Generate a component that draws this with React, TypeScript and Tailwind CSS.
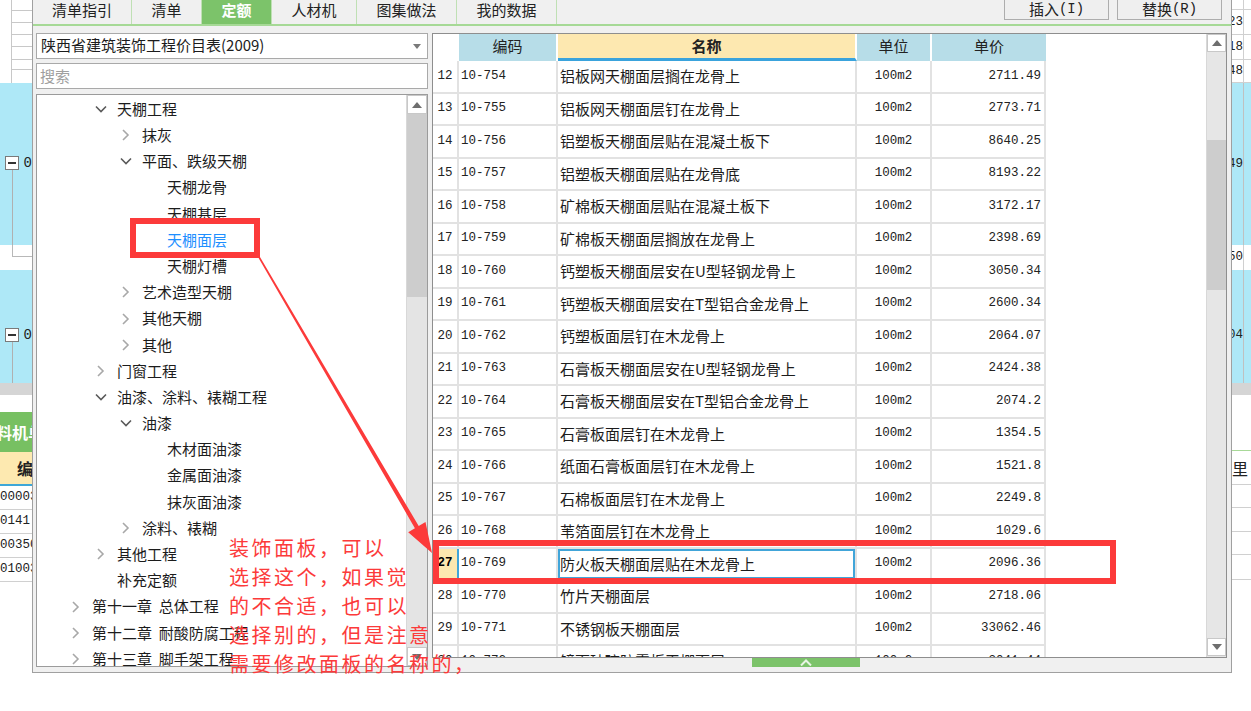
import React from 'react';

type Row = [string, string, string, string];

const rows: Row[] = [
  ['12', '10-754', '铝板网天棚面层搁在龙骨上', '2711.49'],
  ['13', '10-755', '铝板网天棚面层钉在龙骨上', '2773.71'],
  ['14', '10-756', '铝塑板天棚面层贴在混凝土板下', '8640.25'],
  ['15', '10-757', '铝塑板天棚面层贴在龙骨底', '8193.22'],
  ['16', '10-758', '矿棉板天棚面层贴在混凝土板下', '3172.17'],
  ['17', '10-759', '矿棉板天棚面层搁放在龙骨上', '2398.69'],
  ['18', '10-760', '钙塑板天棚面层安在U型轻钢龙骨上', '3050.34'],
  ['19', '10-761', '钙塑板天棚面层安在T型铝合金龙骨上', '2600.34'],
  ['20', '10-762', '钙塑板面层钉在木龙骨上', '2064.07'],
  ['21', '10-763', '石膏板天棚面层安在U型轻钢龙骨上', '2424.38'],
  ['22', '10-764', '石膏板天棚面层安在T型铝合金龙骨上', '2074.2'],
  ['23', '10-765', '石膏板面层钉在木龙骨上', '1354.5'],
  ['24', '10-766', '纸面石膏板面层钉在木龙骨上', '1521.8'],
  ['25', '10-767', '石棉板面层钉在木龙骨上', '2249.8'],
  ['26', '10-768', '苇箔面层钉在木龙骨上', '1029.6'],
  ['27', '10-769', '防火板天棚面层贴在木龙骨上', '2096.36'],
  ['28', '10-770', '竹片天棚面层', '2718.06'],
  ['29', '10-771', '不锈钢板天棚面层', '33062.46'],
  ['30', '10-772', '镜面玻璃防雾板天棚面层', '3041.44'],
];

type Node = [number, 'down' | 'right' | null, string];

const tree: Node[] = [
  [2, 'down', '天棚工程'],
  [3, 'right', '抹灰'],
  [3, 'down', '平面、跌级天棚'],
  [4, null, '天棚龙骨'],
  [4, null, '天棚基层'],
  [4, null, '天棚面层'],
  [4, null, '天棚灯槽'],
  [3, 'right', '艺术造型天棚'],
  [3, 'right', '其他天棚'],
  [3, 'right', '其他'],
  [2, 'right', '门窗工程'],
  [2, 'down', '油漆、涂料、裱糊工程'],
  [3, 'down', '油漆'],
  [4, null, '木材面油漆'],
  [4, null, '金属面油漆'],
  [4, null, '抹灰面油漆'],
  [3, 'right', '涂料、裱糊'],
  [2, 'right', '其他工程'],
  [2, null, '补充定额'],
  [1, 'right', '第十一章  总体工程'],
  [1, 'right', '第十二章  耐酸防腐工程'],
  [1, 'right', '第十三章  脚手架工程'],
];

const indent: Record<number, string> = {
  1: 'pl-[33px]',
  2: 'pl-[58px]',
  3: 'pl-[83px]',
  4: 'pl-[108px]',
};

const tabs = [
  { label: '清单指引', w: 'w-[99px]' },
  { label: '清单', w: 'w-[70px]' },
  { label: '定额', w: 'w-[70px]', active: true },
  { label: '人材机', w: 'w-[85px]' },
  { label: '图集做法', w: 'w-[100px]' },
  { label: '我的数据', w: 'w-[100px]' },
];

const mono = "font-['Liberation_Mono','Noto_Sans_CJK_SC',monospace]";

const Up = () => (
  <svg width="10" height="6" viewBox="0 0 10 6">
    <path d="M0 6 L5 0 L10 6 Z" fill="#6e6e6e" />
  </svg>
);

const Down = () => (
  <svg width="10" height="6" viewBox="0 0 10 6">
    <path d="M0 0 L5 6 L10 0 Z" fill="#6e6e6e" />
  </svg>
);

const Chevron = ({ dir }: { dir: 'down' | 'right' }) =>
  dir === 'down' ? (
    <svg width="12" height="12" viewBox="0 0 12 12">
      <polyline points="1,3.5 6,8.5 11,3.5" fill="none" stroke="#5a5a5a" strokeWidth="1.6" />
    </svg>
  ) : (
    <svg width="12" height="12" viewBox="0 0 12 12">
      <polyline points="3,1 8,6 3,11" fill="none" stroke="#a8a8a8" strokeWidth="1.6" />
    </svg>
  );

const MinusBox = () => (
  <div className="w-[14px] h-[14px] border border-[#7a7a7a] bg-white flex items-center justify-center">
    <div className="w-[8px] h-[1.5px] bg-[#333]" />
  </div>
);

const LeftBg = () => (
  <div className="w-[32px] h-[711px] shrink-0 flex flex-col overflow-hidden text-[#222]">
    <div className="h-[83px] flex">
      <div className="w-[12px] border-r border-[#c8c8c8]" />
      <div className="flex-1 flex flex-col">
        <div className="h-[11px] border-b border-[#c8c8c8]" />
        <div className="h-[12px] border-b border-[#c8c8c8]" />
        <div className="h-[12px] border-b border-[#c8c8c8]" />
        <div className="h-[12px] border-b border-[#c8c8c8]" />
        <div className="h-[13px] border-b border-[#c8c8c8]" />
        <div className="h-[10px] border-b border-[#c8c8c8]" />
      </div>
    </div>
    <div className="h-[162px] bg-[#aee8f7] flex flex-col pt-[73px]">
      <div className="flex items-center gap-[5px] pl-[5px] h-[14px]">
        <MinusBox />
        <span className={`${mono} text-[14px]`}>0</span>
      </div>
      <div className="ml-[12px] flex-1 border-l border-[#b0b0b0]" />
    </div>
    <div className="h-[25px] flex flex-col">
      <div className="ml-[12px] h-[12px] border-l border-b border-[#b8b8b8]" />
    </div>
    <div className="h-[113px] bg-[#aee8f7] flex flex-col pt-[58px]">
      <div className="flex items-center gap-[5px] pl-[5px] h-[14px]">
        <MinusBox />
        <span className={`${mono} text-[14px]`}>0</span>
      </div>
      <div className="ml-[12px] flex-1 border-l border-[#b0b0b0]" />
    </div>
    <div className="h-[12px] bg-[#d5d5d5]" />
    <div className="h-[17px]" />
    <div className="h-[40px] bg-[#77c062] flex items-center overflow-hidden">
      <span className="-ml-[4px] text-white font-bold text-[16px] whitespace-nowrap">料机单</span>
    </div>
    <div className="h-[34px] bg-[#fde9b0] border-b-2 border-[#3ea7d8] flex items-center pl-[17px] overflow-hidden">
      <span className="font-bold text-[16px] whitespace-nowrap">编码</span>
    </div>
    {['00003', '0141', '00350', '01003'].map((t) => (
      <div key={t} className={`h-[24px] border-b border-[#d0d0d0] flex items-center ${mono} text-[12.5px] whitespace-nowrap`}>
        {t}
      </div>
    ))}
  </div>
);

const RightBg = () => (
  <div className={`w-[19px] h-[711px] shrink-0 flex flex-col overflow-hidden ${mono} text-[12.5px] text-[#222]`}>
    <div className="h-[10px] border-b border-[#d0d0d0] flex">
      <div className="w-[12px] border-r border-[#d0d0d0]" />
    </div>
    {['23', '18', '48'].map((t, i) => (
      <div key={t} className={`${i === 2 ? 'h-[23px]' : 'h-[25px]'} border-b border-[#d0d0d0] flex`}>
        <div className="w-[12px] border-r border-[#d0d0d0] flex items-center justify-end overflow-hidden whitespace-nowrap">{t}</div>
      </div>
    ))}
    <div className="h-[162px] bg-[#aee8f7] flex">
      <div className="w-[12px] border-r border-[#c0c0c0] flex items-center justify-end overflow-hidden">49</div>
    </div>
    <div className="h-[25px] flex">
      <div className="w-[12px] border-r border-[#d0d0d0] flex items-center justify-end overflow-hidden">50</div>
    </div>
    <div className="h-[113px] bg-[#aee8f7] flex">
      <div className="w-[12px] border-r border-[#c0c0c0] flex items-center justify-end overflow-hidden pt-[18px]">04</div>
    </div>
    <div className="h-[12px] bg-[#d5d5d5]" />
    <div className="h-[56px] border-b border-[#a8d998]" />
    <div className="h-[34px] border-b border-[#d0d0d0] flex items-center font-['Noto_Sans_CJK_SC',sans-serif] text-[16px]">里</div>
    <div className="h-[23px] border-b border-[#d0d0d0]" />
    <div className="h-[24px] border-b border-[#d0d0d0]" />
    <div className="h-[23px] border-b border-[#d0d0d0]" />
    <div className="h-[25px] border-b border-[#d0d0d0]" />
  </div>
);

const TreePanel = () => (
  <div className="flex-1 min-h-0 border border-[#9b9b9b] bg-white flex overflow-hidden">
    <div className="flex-1 flex flex-col overflow-hidden pt-[1px]">
      {tree.map(([lvl, dir, text]) => (
        <div key={text} className={`h-[26.2px] shrink-0 flex items-center ${indent[lvl]}`}>
          <div className="w-[22px] flex items-center">{dir && <Chevron dir={dir} />}</div>
          <span
            className={`text-[15px] whitespace-pre ${
              text === '天棚面层' ? 'text-[#1e8fff]' : 'text-[#1c1c1c]'
            }`}
          >
            {text}
          </span>
        </div>
      ))}
    </div>
    <div className="w-[21px] bg-[#e4e4e4] flex flex-col border-l border-[#d8d8d8]">
      <div className="h-[19px] bg-white border border-[#c8c8c8] flex items-center justify-center">
        <Up />
      </div>
      <div className="h-[183px] bg-[#cdcdcd]" />
      <div className="flex-1" />
      <div className="h-[19px] bg-white border border-[#c8c8c8] flex items-center justify-center">
        <Down />
      </div>
    </div>
  </div>
);

const cellB = 'border-r-2 border-[#e2e2e2]';

const Table = () => (
  <div className="flex-1 min-h-0 border border-[#8e8e8e] bg-white flex overflow-hidden">
    <div className="flex-1 flex flex-col overflow-hidden">
      <div className="h-[27px] shrink-0 flex text-[15px] text-[#222]">
        <div className="w-[26px] border-r-2 border-white bg-white" />
        <div className="w-[99px] border-r-2 border-white bg-[#b7dde8] flex items-center justify-center pb-[2px]">编码</div>
        <div className="w-[299px] border-r-2 border-white bg-[#fde8b0] border-b-[3px] border-b-[#3aa3dc] flex items-center justify-center font-bold">
          名称
        </div>
        <div className="w-[75px] border-r-2 border-white bg-[#b7dde8] flex items-center justify-center pb-[2px]">单位</div>
        <div className="w-[114px] bg-[#b7dde8] flex items-center justify-center pb-[2px]">单价</div>
      </div>
      {rows.map(([n, code, name, price]) => {
        const sel = n === '27';
        return (
          <div key={n} className="h-[32.5px] shrink-0 flex">
            <div className="w-[613px] flex border-b-2 border-[#e2e2e2]">
              <div
                className={`w-[26px] flex items-center justify-center ${mono} text-[12.5px] ${
                  sel ? 'bg-[#fde8b0] font-bold border-r-2 border-[#41a5d9] text-black' : `${cellB} text-[#222]`
                }`}
              >
                {n}
              </div>
              <div className={`w-[99px] ${cellB} flex items-center pl-[2px] ${mono} text-[12.5px] text-[#222]`}>{code}</div>
              <div
                className={`w-[299px] ${cellB} flex items-center pl-[2px] text-[15px] text-[#1c1c1c] whitespace-nowrap overflow-hidden ${
                  sel ? 'ring-2 ring-inset ring-[#41a5d9]' : ''
                }`}
              >
                {name}
              </div>
              <div className={`w-[75px] ${cellB} flex items-center justify-center ${mono} text-[12.5px] text-[#222]`}>100m2</div>
              <div className={`w-[114px] ${cellB} flex items-center justify-end pr-[3px] ${mono} text-[12.5px] text-[#222]`}>
                {price}
              </div>
            </div>
          </div>
        );
      })}
    </div>
    <div className="w-[20px] bg-[#e6e6e6] flex flex-col border-l border-[#d8d8d8] pb-[1px]">
      <div className="h-[18px] bg-white border border-[#c8c8c8] flex items-center justify-center">
        <Up />
      </div>
      <div className="h-[88px]" />
      <div className="h-[150px] bg-[#cdcdcd]" />
      <div className="flex-1" />
      <div className="h-[18px] bg-white border border-[#c8c8c8] flex items-center justify-center">
        <Down />
      </div>
    </div>
  </div>
);

const Dialog = () => (
  <div className="w-[1200px] h-[673px] shrink-0 flex flex-col bg-[#f0f0f0] border-l border-r border-b border-[#a0a0a0]">
    <div className="h-[26px] shrink-0 flex border-b-2 border-[#a6d996]">
      {tabs.map((t) => (
        <div
          key={t.label}
          className={`${t.w} flex items-start justify-center border-r border-[#bfe0b4] text-[15px] leading-[20px] ${
            t.active ? 'bg-[#7cc36a] text-white font-bold' : 'text-[#222]'
          }`}
        >
          {t.label}
        </div>
      ))}
      <div className="ml-auto mr-[9px] flex gap-[8px] items-start">
        <button className="w-[105px] h-[22px] border border-[#adadad] bg-[#efefef] text-[15px] text-[#222] flex items-center justify-center -mt-[2px]">
          插入<span className={`${mono} text-[14px]`}>(I)</span>
        </button>
        <button className="w-[105px] h-[22px] border border-[#adadad] bg-[#efefef] text-[15px] text-[#222] flex items-center justify-center -mt-[2px]">
          替换<span className={`${mono} text-[14px]`}>(R)</span>
        </button>
      </div>
    </div>
    <div className="flex-1 min-h-0 flex pl-[3px] pr-[4px] gap-[4px]">
      <div className="w-[392px] flex flex-col pt-[7px] pb-[5px]">
        <div className="h-[26px] shrink-0 border border-[#a9a9a9] bg-white flex items-center pl-[4px] pr-[6px] text-[15px] text-[#1c1c1c]">
          <span className="flex-1 -mt-px">陕西省建筑装饰工程价目表(2009)</span>
          <svg width="8" height="5" viewBox="0 0 8 5">
            <path d="M0 0 L4 5 L8 0 Z" fill="#7a7a7a" />
          </svg>
        </div>
        <div className="h-[26px] shrink-0 mt-[4px] border border-[#a9a9a9] bg-white flex items-center pl-[3px] text-[15px] text-[#a0a0a0]">
          搜索
        </div>
        <div className="mt-[5px] flex-1 min-h-0 flex">
          <TreePanel />
        </div>
      </div>
      <div className="flex-1 flex flex-col pt-[7px]">
        <Table />
        <div className="h-[14px] shrink-0 bg-[#f0f0f0]">
          <div className="ml-[320px] w-[108px] h-[9px] bg-[#7cc36a] flex items-center justify-center">
            <svg width="12" height="7" viewBox="0 0 12 7">
              <polyline points="1,6.5 6,1.5 11,6.5" fill="none" stroke="#e8f5e3" strokeWidth="2" />
            </svg>
          </div>
        </div>
      </div>
    </div>
  </div>
);

export default function App() {
  return (
    <div className="relative w-[1251px] h-[711px] overflow-hidden bg-white flex items-start font-['Noto_Sans_CJK_SC',sans-serif]">
      <LeftBg />
      <Dialog />
      <RightBg />

      {/* annotation layer */}
      <div className="absolute left-[130px] top-[218px] w-[130px] h-[40px] border-[6px] border-[#fc3a3a]" />
      <div className="absolute left-[433px] top-[540px] w-[683px] h-[44px] border-[6px] border-[#fc3a3a]" />
      <svg className="absolute left-0 top-0 pointer-events-none" width="1251" height="711">
        <polygon
          points="258.3,257.4 414.9,528.2 408.2,532.2 432,553 425.5,522.1 418.7,526.0 259.7,256.6"
          fill="#fc3a3a"
        />
      </svg>
      <div className="absolute left-[229px] top-[533px] text-[20px] leading-[29px] tracking-[2.5px] text-[#fc3a3a] whitespace-pre">
        {'装饰面板，可以\n选择这个，如果觉\n的不合适，也可以\n选择别的，但是注意\n需要修改面板的名称的，'}
      </div>
    </div>
  );
}
